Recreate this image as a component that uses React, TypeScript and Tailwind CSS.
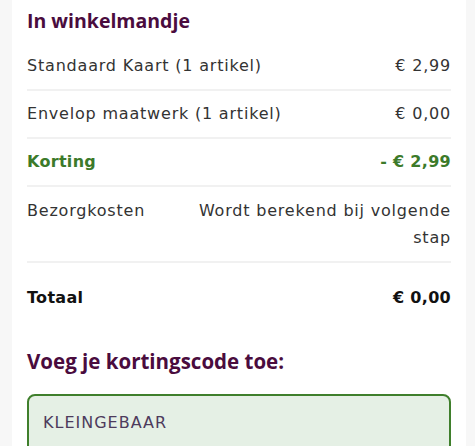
import React from "react";

const Row = ({
  label,
  value,
  className = "",
}: {
  label: React.ReactNode;
  value: React.ReactNode;
  className?: string;
}) => (
  <div
    className={`flex justify-between items-start py-[10px] border-b-2 border-[#f1f1f1] ${className}`}
  >
    <div>{label}</div>
    <div className="text-right">{value}</div>
  </div>
);

const heading = { fontFamily: "'Open Sans', 'Noto Sans', sans-serif" };

export default function App() {
  return (
    <div
      className="w-[475px] h-[446px] overflow-hidden bg-[#f7f7f7] flex"
      style={{ fontFamily: "'DejaVu Sans', 'Open Sans', sans-serif" }}
    >
      <div className="ml-[12px] w-[454px] bg-white px-[15px] pt-[8px] text-[16px] tracking-[0.8px] leading-[26px] text-[#333]">
        <h2
          className="text-[19.5px] font-bold tracking-normal leading-[26px] text-[#4a0c3e] mb-[9px]"
          style={heading}
        >
          In winkelmandje
        </h2>
        <Row label="Standaard Kaart (1 artikel)" value="€ 2,99" />
        <Row label="Envelop maatwerk (1 artikel)" value="€ 0,00" />
        <Row
          label="Korting"
          value="- € 2,99"
          className="font-bold tracking-[0.3px] text-[#3c7a2a]"
        />
        <Row
          label="Bezorgkosten"
          className="leading-[27px]"
          value={
            <>
              Wordt berekend bij volgende
              <br />
              stap
            </>
          }
        />
        <div className="flex justify-between pt-[22px] leading-[26px] font-bold tracking-[0.3px] text-[#111]">
          <div>Totaal</div>
          <div>€ 0,00</div>
        </div>
        <h3
          className="mt-[37px] text-[20.5px] font-bold tracking-normal leading-[26px] text-[#4a0c3e]"
          style={heading}
        >
          Voeg je kortingscode toe:
        </h3>
        <div className="mt-[20px] h-[60px] rounded-[8px] border-2 border-[#3f7f2c] bg-[#e5f0e5] px-[14px] pt-[14px] text-[#4d3b5c] tracking-[1px] leading-[26px]">
          KLEINGEBAAR
        </div>
      </div>
    </div>
  );
}
